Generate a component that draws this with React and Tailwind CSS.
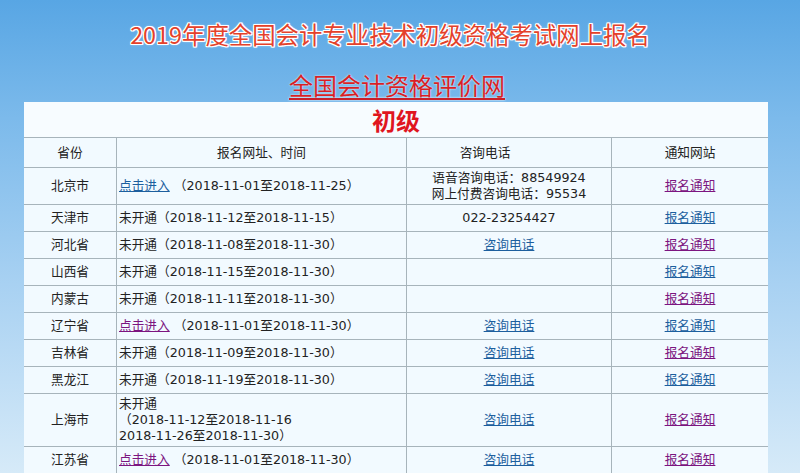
import React from "react";

const FONT = { fontFamily: '"DejaVu Sans", "Noto Sans CJK SC", sans-serif' };

const BLUE = "text-[#1d5f9e] underline";
const PURPLE = "text-[#7c1580] underline";

const rows = [
  { p: "北京市", reg: { link: "blue", text: "（2018-11-01至2018-11-25）" }, phone: ["语音咨询电话：88549924", "网上付费咨询电话：95534"], note: "purple", h: "h-[37px]" },
  { p: "天津市", reg: { text: "未开通（2018-11-12至2018-11-15）" }, phone: ["022-23254427"], note: "blue" },
  { p: "河北省", reg: { text: "未开通（2018-11-08至2018-11-30）" }, phoneLink: true, note: "purple" },
  { p: "山西省", reg: { text: "未开通（2018-11-15至2018-11-30）" }, note: "blue" },
  { p: "内蒙古", reg: { text: "未开通（2018-11-11至2018-11-30）" }, note: "purple" },
  { p: "辽宁省", reg: { link: "purple", text: "（2018-11-01至2018-11-30）" }, phoneLink: true, note: "blue" },
  { p: "吉林省", reg: { text: "未开通（2018-11-09至2018-11-30）" }, phoneLink: true, note: "purple" },
  { p: "黑龙江", reg: { text: "未开通（2018-11-19至2018-11-30）" }, phoneLink: true, note: "blue" },
  { p: "上海市", reg: { lines: ["未开通", "（2018-11-12至2018-11-16", "2018-11-26至2018-11-30）"] }, phoneLink: true, note: "purple", h: "h-[53px]" },
  { p: "江苏省", reg: { link: "purple", text: "（2018-11-01至2018-11-30）" }, phoneLink: true, note: "purple" },
];

function Row({ r }) {
  return (
    <div className={`grid grid-cols-[93px_290px_205px_156px] border-b border-[#a7b4bb] ${r.h || "h-[27px]"}`}>
      <div className="border-r border-[#a7b4bb] flex items-center justify-center">{r.p}</div>
      <div className="border-r border-[#a7b4bb] flex items-center pl-[2px]">
        {r.reg.lines ? (
          <div className="flex flex-col">
            {r.reg.lines.map((l, i) => (
              <span key={i}>{l}</span>
            ))}
          </div>
        ) : (
          <span>
            {r.reg.link && (
              <a className={r.reg.link === "blue" ? BLUE : PURPLE}>点击进入</a>
            )}
            {r.reg.link ? " " : ""}
            {r.reg.text}
          </span>
        )}
      </div>
      <div className="border-r border-[#a7b4bb] flex flex-col items-center justify-center">
        {r.phone && r.phone.map((l, i) => <span key={i}>{l}</span>)}
        {r.phoneLink && <a className={BLUE}>咨询电话</a>}
      </div>
      <div className="flex items-center justify-center">
        <a className={r.note === "blue" ? BLUE : PURPLE}>报名通知</a>
      </div>
    </div>
  );
}

export default function App() {
  return (
    <div
      className="w-[800px] h-[473px] overflow-hidden bg-[linear-gradient(180deg,#58a6e4_0%,#7cbaeb_25%,#a8d1f2_60%,#d6eaf8_100%)]"
      style={FONT}
    >
      <div className="h-[68px] flex items-center justify-center">
        <h1
          className="text-[23.4px] leading-[28px] text-[#e4412b] mr-[20px] [text-shadow:1px_0_0_#fff,-1px_0_0_#fff,0_1px_0_#fff,0_-1px_0_#fff,1px_1px_0_#fff,-1px_-1px_0_#fff,1px_-1px_0_#fff,-1px_1px_0_#fff,0_0_3px_#fff]"
          style={{ fontFamily: '"Noto Sans CJK SC", sans-serif' }}
        >
          2019年度全国会计专业技术初级资格考试网上报名
        </h1>
      </div>
      <div className="h-[34px] flex items-start justify-center pt-[3px]">
        <a
          className="text-[24px] leading-[28px] text-[#d81f26] underline decoration-[#c8202a] underline-offset-[3px] ml-[-6px] [text-shadow:0_0_2px_#fff]"
          style={{ fontFamily: '"Noto Sans CJK SC", sans-serif' }}
        >
          全国会计资格评价网
        </a>
      </div>
      <div className="ml-[24px] w-[744px] bg-[#f2faff] text-[12.7px] leading-[16px] text-[#222]">
        <div className="h-[36px] border-b border-[#a7b4bb] bg-[#f7fcff] flex items-center justify-center">
          <span
            className="text-[24px] font-bold text-[#e0161f]"
            style={{ fontFamily: '"Noto Sans CJK SC", sans-serif' }}
          >
            初级
          </span>
        </div>
        <div className="grid grid-cols-[93px_290px_205px_156px] border-b border-[#a7b4bb] h-[30px]">
          <div className="border-r border-[#a7b4bb] flex items-center justify-center">省份</div>
          <div className="border-r border-[#a7b4bb] flex items-center justify-center">报名网址、时间</div>
          <div className="border-r border-[#a7b4bb] flex items-center justify-center pr-[48px]">咨询电话</div>
          <div className="flex items-center justify-center">通知网站</div>
        </div>
        {rows.map((r, i) => (
          <Row key={i} r={r} />
        ))}
      </div>
    </div>
  );
}
